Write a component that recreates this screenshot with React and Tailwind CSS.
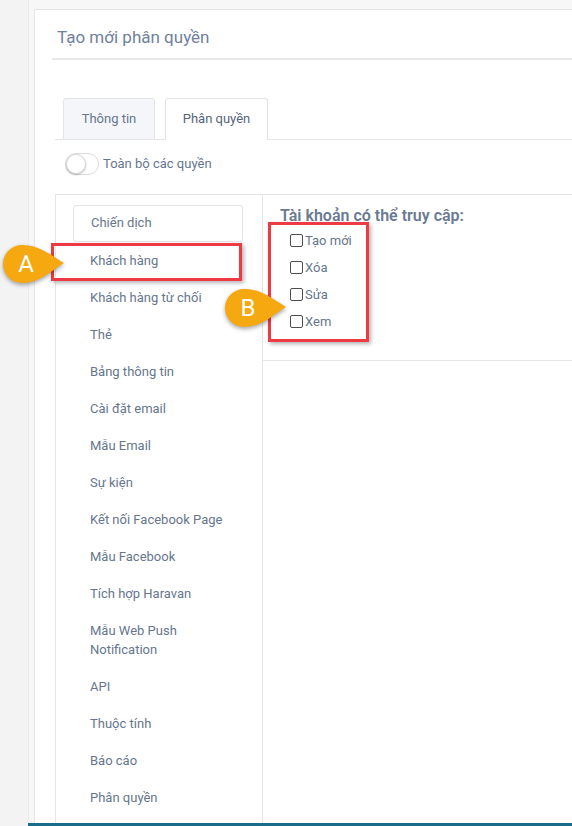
import React from 'react';

const menu = [
  'Chiến dịch',
  'Khách hàng',
  'Khách hàng từ chối',
  'Thẻ',
  'Bảng thông tin',
  'Cài đặt email',
  'Mẫu Email',
  'Sự kiện',
  'Kết nối Facebook Page',
  'Mẫu Facebook',
  'Tích hợp Haravan',
  'Mẫu Web Push Notification',
  'API',
  'Thuộc tính',
  'Báo cáo',
  'Phân quyền',
];

const perms = ['Tạo mới', 'Xóa', 'Sửa', 'Xem'];

// teardrop callout, point on the right
function Balloon({ label, className }) {
  return (
    <div className={'absolute ' + className}>
      <svg width="66" height="44" viewBox="0 0 66 44" className="drop-shadow-[0_2px_2px_rgba(0,0,0,0.35)]">
        <path
          d="M22 3 C40 3 52 14 64 21 C52 28 40 41 22 41 A19 19 0 0 1 22 3 Z"
          fill="#f5a810"
        />
      </svg>
      <span className="absolute left-[14px] top-[8px] w-[24px] text-center text-[24px] leading-[28px] text-white">
        {label}
      </span>
    </div>
  );
}

export default function App() {
  return (
    <div className="relative h-[826px] overflow-hidden bg-[#f3f3f3] font-['Roboto',sans-serif] text-[#66768e]">
      <div className="ml-[28px] flex h-full flex-col border-b-[3px] border-[#1b6c8a]">
        <div className="flex min-h-0 flex-1 border-l border-[#ececec] bg-[#f7f7f7] pl-[5px] pt-[9px]">
          <div className="flex min-w-0 flex-1 flex-col border-l border-t border-[#e4e4e4] bg-white">
            {/* header */}
            <div className="ml-[17px] border-b-2 border-[#e8e8e8] pb-[10px] pl-[5px] pt-[16px]">
              <h1 className="whitespace-nowrap text-[17px] leading-[22px] text-[#6f80a0]">Tạo mới phân quyền</h1>
            </div>

            <div className="ml-[20px] flex min-h-0 flex-1 flex-col pt-[38px]">
              {/* tabs */}
              <div className="flex gap-[10px] border-b border-[#e3e3e3] pl-[8px]">
                <div className="-mb-px flex h-[42px] w-[92px] items-center justify-center rounded-t-[3px] border border-[#e3e3e3] bg-[#f4f6f9] text-[13px]">
                  Thông tin
                </div>
                <div className="-mb-px flex h-[42px] w-[103px] items-center justify-center rounded-t-[3px] border border-b-white border-[#e3e3e3] bg-white text-[13px] text-[#55657c]">
                  Phân quyền
                </div>
              </div>

              {/* toggle */}
              <div className="flex items-center gap-[4px] pl-[10px] pt-[13px]">
                <div className="relative h-[22px] w-[34px] rounded-full border border-[#dcdcdc] bg-white">
                  <div className="absolute left-0 top-0 h-[20px] w-[20px] rounded-full border border-[#d6d6d6] bg-white shadow-[0_1px_2px_rgba(0,0,0,0.25)]" />
                </div>
                <span className="text-[13px]">Toàn bộ các quyền</span>
              </div>

              {/* panel */}
              <div className="mt-[19px] flex min-h-0 flex-1 border-l border-t border-[#e6e6e6]">
                <div className="w-[207px] shrink-0 border-r border-[#e6e6e6] pl-[17px] pt-[10px]">
                  <ul className="w-[170px]">
                    {menu.map((m, i) => (
                      <li
                        key={m}
                        className={
                          'px-[17px] text-[13px] leading-[19px] ' +
                          (i === 0 ? 'rounded-[3px] border border-[#e4e4e4] pb-[9px] pt-[7px]' : 'py-[9px]')
                        }
                      >
                        {m}
                      </li>
                    ))}
                  </ul>
                </div>
                <div className="min-w-0 flex-1">
                  <div className="border-b border-[#e6e6e6] pb-[25px] pl-[17px] pt-[11px]">
                    <h2 className="whitespace-nowrap text-[16px] font-semibold leading-[20px] text-[#6a7a92]">
                      Tài khoản có thể truy cập:
                    </h2>
                    <div className="pl-[10px] pt-[1px]">
                      {perms.map((p) => (
                        <label key={p} className="flex h-[27px] items-center gap-[2px] text-[13px]">
                          <span className="h-[13px] w-[13px] rounded-[2px] border border-[#4d4d4d] bg-white" />
                          {p}
                        </label>
                      ))}
                    </div>
                  </div>
                </div>
              </div>
            </div>
          </div>
        </div>
      </div>

      {/* annotations */}
      <div className="absolute left-[51px] top-[243px] h-[38px] w-[191px] border-[3px] border-[#ee3a43] shadow-[2px_2px_4px_rgba(0,0,0,0.3)]" />
      <div className="absolute left-[268px] top-[222px] h-[120px] w-[101px] border-[3px] border-[#ee3a43] shadow-[2px_2px_4px_rgba(0,0,0,0.3)]" />
      <Balloon label="A" className="left-[0px] top-[242px]" />
      <Balloon label="B" className="left-[222px] top-[286px]" />
    </div>
  );
}
